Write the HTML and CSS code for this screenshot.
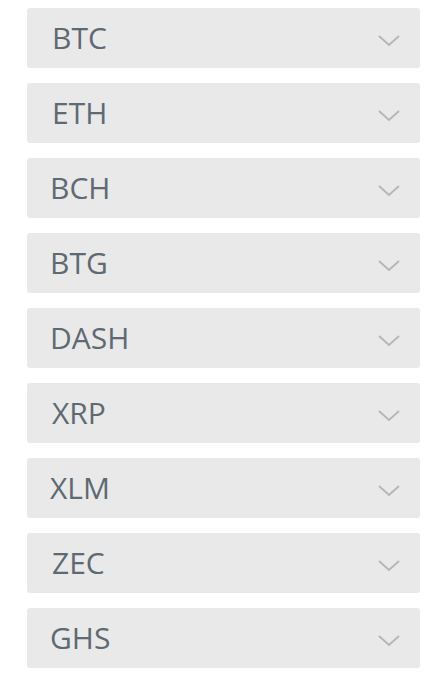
FILE: index.html
```html
<!DOCTYPE html>
<html lang="en">
<head>
    <meta charset="UTF-8">
    <meta name="viewport" content="width=device-width, initial-scale=1.0">
    <title>Currencies</title>
    <link rel="stylesheet" href="styles.css">
</head>
<body>
    <div class="list">
        <div class="item"><span class="label">BTC</span><svg class="chevron" viewBox="0 0 22 12"><path d="M1 1 L11 10 L21 1"/></svg></div>
        <div class="item"><span class="label">ETH</span><svg class="chevron" viewBox="0 0 22 12"><path d="M1 1 L11 10 L21 1"/></svg></div>
        <div class="item"><span class="label shift-l">BCH</span><svg class="chevron" viewBox="0 0 22 12"><path d="M1 1 L11 10 L21 1"/></svg></div>
        <div class="item"><span class="label shift-l">BTG</span><svg class="chevron" viewBox="0 0 22 12"><path d="M1 1 L11 10 L21 1"/></svg></div>
        <div class="item"><span class="label shift-l">DASH</span><svg class="chevron" viewBox="0 0 22 12"><path d="M1 1 L11 10 L21 1"/></svg></div>
        <div class="item"><span class="label">XRP</span><svg class="chevron" viewBox="0 0 22 12"><path d="M1 1 L11 10 L21 1"/></svg></div>
        <div class="item"><span class="label shift-l">XLM</span><svg class="chevron" viewBox="0 0 22 12"><path d="M1 1 L11 10 L21 1"/></svg></div>
        <div class="item"><span class="label">ZEC</span><svg class="chevron" viewBox="0 0 22 12"><path d="M1 1 L11 10 L21 1"/></svg></div>
        <div class="item"><span class="label shift-l">GHS</span><svg class="chevron" viewBox="0 0 22 12"><path d="M1 1 L11 10 L21 1"/></svg></div>
    </div>
</body>
</html>
```
FILE: styles.css
```css
body {
    margin: 0;
    background: #ffffff;
    font-family: "Open Sans", "Liberation Sans", sans-serif;
}

.list {
    display: flex;
    flex-direction: column;
    gap: 15px;
    padding: 8px 6px 0 27px;
}

.item {
    display: flex;
    align-items: center;
    justify-content: space-between;
    height: 60px;
    background: #e9e9e9;
    border-radius: 3px;
    padding: 0 20px 0 25px;
    box-sizing: border-box;
}

.label {
    font-size: 30px;
    color: #5e6972;
    line-height: 1;
}

.shift-l {
    margin-left: -2px;
}

.chevron {
    width: 22px;
    height: 12px;
    margin-top: 6px;
}

.chevron path {
    fill: none;
    stroke: #b5b5b5;
    stroke-width: 1.8;
}
```
